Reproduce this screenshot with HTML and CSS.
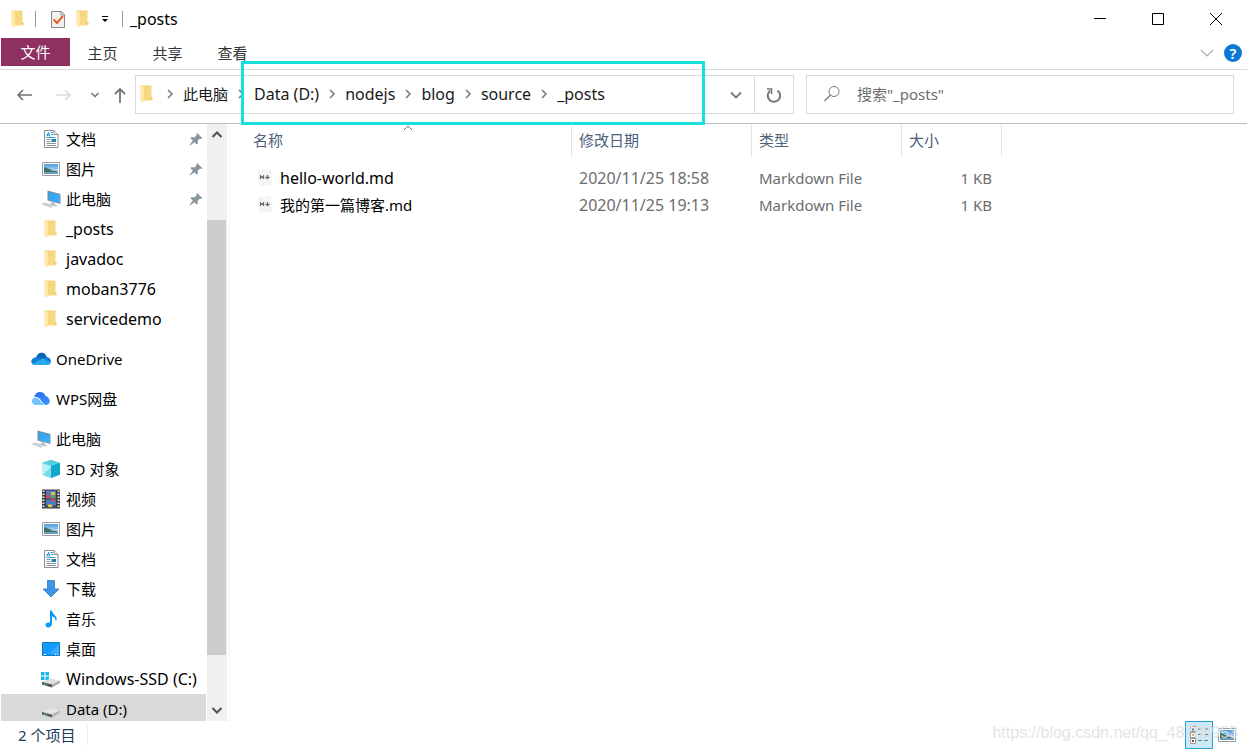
FILE: index.html
```html
<!DOCTYPE html>
<html lang="zh-CN">
<head>
<meta charset="utf-8">
<title>_posts</title>
<link rel="stylesheet" href="styles.css">
</head>
<body>
<svg class="sprite" aria-hidden="true">
  <defs>
    <linearGradient id="g-folder" x2="1" y2="1"><stop offset="0" stop-color="#f3d47b"/><stop offset="1" stop-color="#f8dc85"/></linearGradient>
    <linearGradient id="g-screen" x2="1" y2="1"><stop offset="0" stop-color="#3a9de0"/><stop offset="1" stop-color="#35b4ff"/></linearGradient>
    <linearGradient id="g-wps" x2="0" y2="1"><stop offset="0" stop-color="#2b6cf3"/><stop offset="1" stop-color="#399bff"/></linearGradient>
    <linearGradient id="g-sky" x2="0" y2="1"><stop offset="0" stop-color="#4b9be0"/><stop offset="1" stop-color="#e4f4fc"/></linearGradient>
  </defs>
  <symbol id="folder" viewBox="0 0 20 20">
    <path d="M3.500 1.500h11v12l1 1v2h-10z" fill="url(#g-folder)"/>
    <path d="M3.500 1.500L7 3v14.500l-1.500.8-2-1.500z" fill="#ffe8a3"/>
    <path d="M13 13.500V15h2.500v-1.500z" fill="#edc868"/>
  </symbol>
  <symbol id="doc" viewBox="0 0 20 20">
    <path d="M3.500 1.500h9.500l4 4v13H3.500z" fill="#fff" stroke="#8c8c8c"/>
    <path d="M13 1.500v4h4" fill="#eee" stroke="#8c8c8c"/>
    <path d="M5.500 7.500l2-4 1.500 4M6 6h3" fill="none" stroke="#168bd2"/>
    <path d="M9.500 3.500h2.500M10 5.500h2M5.500 8.500h9" stroke="#2ba1de"/>
    <path d="M5.500 10.500h4M5.500 12.500h4M5.500 14.500h9.500M5.500 16.500h9.500" stroke="#8b959d"/>
    <path d="M10.500 10h4.500v3h-4.500z" fill="#257fb7"/>
  </symbol>
  <symbol id="picture" viewBox="0 0 20 20">
    <path d="M1.500 3.500h17v13h-17z" fill="#fff" stroke="#9b9b9b"/>
    <path d="M3 5h14v10H3z" fill="url(#g-sky)"/>
    <path d="M3 8.500c4 0 5 2 8 3 2 .5 4 .5 6 1V13.500H3z" fill="#3e705e"/>
    <path d="M3 13.300h14V15H3z" fill="#629bc8"/>
  </symbol>
  <symbol id="pc" viewBox="0 0 20 20">
    <path d="M6.500 1.500l13 3.500v10l-13-3.500z" fill="#7c8c98"/>
    <path d="M7.500 2.700L19 5.800V14L7.500 11z" fill="url(#g-screen)"/>
    <path d="M10 13l4 1v2l3 .5-2 1-5-1.500z" fill="#b3bdc5"/>
    <path d="M0 15l3-1.500 10 3-3 2.500z" fill="#d7dce0"/>
    <path d="M2 15l8 2.300M4 14l7.500 2.300" stroke="#aeb8bf" stroke-width=".6"/>
  </symbol>
  <symbol id="pin" viewBox="0 0 20 20">
    <path d="M11.500 2.500l6.500 6.500-1.500 1-1.500-.5-3 3 .5 3.500-1.500 1-3-3-5.500 4-.5-.5 4-5.500L3 9l1.500-1.500 3.500.5 3-3-.5-1.500z" fill="#8b979f"/>
  </symbol>
  <symbol id="cloud" viewBox="0 0 20 20">
    <path d="M5.500 8C7 2.500 14 2 15.500 8c6 .5 5.500 8 .5 8H4C-1 16-1.500 9 5.500 8z" fill="#0b7fd6"/>
    <path d="M5.500 7.500C7.500 2.500 14 2 15.500 8L10 10z" fill="#0666b7"/>
    <path d="M1.500 15L12 9l7.500 5c-1 1.500-2 2-3.500 2H4c-1 0-2-.5-2.500-1z" fill="#28a8ea"/>
  </symbol>
  <symbol id="wps" viewBox="0 0 20 20">
    <path d="M3.500 9C3 2 13 1 14.500 7c5 1.500 6 8 1 9H12L8 9z" fill="url(#g-wps)"/>
    <path d="M4.500 8.500c5-1 5.500 7.500 10 7.500H5C-.5 16-.5 9 4.500 8.500z" fill="#76c2ff"/>
    <path d="M4 8.500c5.500-1 5.500 6 10 7.500" fill="none" stroke="#fff"/>
  </symbol>
  <symbol id="cube" viewBox="0 0 20 20">
    <path d="M10 1l9 3v11.500L10 19l-9-3.500V4z" fill="#20b5cf"/>
    <path d="M1 4l9-3 9 3-9 3z" fill="#55cfdd"/>
    <path d="M1 4l9 3v12l-9-3.500z" fill="#bdf1f4"/>
    <path d="M10 8v11l-8-3z" fill="#78dbe5"/>
    <path d="M10 7l9-3v11.500L10 19z" fill="#10a8cc"/>
  </symbol>
  <symbol id="video" viewBox="0 0 20 20">
    <path d="M1 .5h18v19H1z" fill="#3b3b3b"/>
    <path d="M5 1.500h10v8H5zM5 10.500h10v8H5z" fill="#4d79cc"/>
    <path d="M2.500 1.500v18M17.500 1.500v18" stroke="#e8e8e8" stroke-width="2" stroke-dasharray="1.500 1.500"/>
    <path d="M5 6h4v3H5z" fill="#d84265"/><path d="M10 3h4v3h-4zM7 15.500h4V18H7z" fill="#ebc233"/>
    <path d="M9 6.500h5v2H9z" fill="#4ba849"/><path d="M10.500 9h3v3.500h-3z" fill="#d84b2c"/>
    <path d="M5 16.500h2v2H5zM12 16.500h3v2h-3z" fill="#3a4d30"/>
  </symbol>
  <symbol id="download" viewBox="0 0 20 20"><path d="M6.500 1.500h7V10h4.500l-8 8-8-8h4.500z" fill="#3d95e3" stroke="#287bc5" stroke-width=".8"/></symbol>
  <symbol id="music" viewBox="0 0 20 20">
    <path d="M9 1.500h2c0 4 6 5 4.500 10h-1c0-3-2-4-3.500-4v7.500c0 4-6 4.500-6.500 1.500-.5-2.500 2-3.500 4.500-3z" fill="#0b9af1"/>
  </symbol>
  <symbol id="desktop" viewBox="0 0 20 20">
    <path d="M1.500 3.500h17v13h-17z" fill="#159aff" stroke="#1079bd"/>
    <path d="M8 15L18 5v10z" fill="#38abff"/>
    <path d="M3 15.500h2M14 15.500h1M16 15.500h1" stroke="#fff"/>
  </symbol>
  <symbol id="disk" viewBox="0 0 20 20">
    <path d="M1 13l8-3.500 10 2-8 4z" fill="#e6e6e6"/>
    <path d="M1 13l10 2.500v3L1 15.500z" fill="#5e5e5e"/>
    <path d="M11 15.500l8-4v2.500l-8 4.500z" fill="#b4b4b4"/>
    <path d="M3 15l3 .8" stroke="#52d45f"/>
  </symbol>
  <symbol id="windisk" viewBox="0 0 20 20">
    <path d="M0 3h3.500v3.500H0zM4.500 3H8v3.500H4.500zM0 7.500h3.500V11H0zM4.500 7.500H8V11H4.500z" fill="#10b7ec"/>
    <path d="M1 13l8-3.500 10 2-8 4z" fill="#dfdfdf"/>
    <path d="M1 13l10 2.500v3L1 15.500z" fill="#4e4e4e"/>
    <path d="M11 15.500l8-4v2.500l-8 4.500z" fill="#aaa"/>
    <path d="M3 15l3 .8" stroke="#52d45f"/>
  </symbol>
  <symbol id="chev-right" viewBox="0 0 10 10"><path d="M3 1l4 4-4 4" fill="none" stroke="#777" stroke-width="1.500"/></symbol>
  <symbol id="markdown" viewBox="0 0 16 20">
    <path d="M1 2l13-1 1 16-13 1z" fill="#f4f4f4"/>
    <path d="M3.500 11V8l1.500 1.500L6.500 8v3M10.500 7v3M8.500 9l2 1.500 2-1.500" fill="none" stroke="#666" stroke-width="1.200"/>
  </symbol>
</svg>

<div class="window">
  <header class="titlebar">
    <svg class="icon"><use href="#folder"/></svg>
    <span class="divider"></span>
    <button class="quick" aria-label="属性">
      <svg class="icon" viewBox="0 0 20 20"><path d="M3.500 2.500h10l3 3V18.500h-13z" fill="#f2f2f2" stroke="#888"/><path d="M13 2.500V6h3.500" fill="#fff" stroke="#888"/><path d="M5.500 10.500L9 14l6-7" fill="none" stroke="#ef5a1c" stroke-width="2"/></svg>
    </button>
    <button class="quick" aria-label="新建文件夹"><svg class="icon"><use href="#folder"/></svg></button>
    <button class="more" aria-label="自定义快速访问工具栏"><svg width="8" height="8" viewBox="0 0 8 8"><path d="M1 1.500h6" stroke="#000"/><path d="M1 4h6L4 7z"/></svg></button>
    <span class="divider"></span>
    <h1 class="title latin">_posts</h1>
    <div class="controls">
      <button aria-label="最小化"><svg width="14" height="14" viewBox="0 0 14 14"><path d="M1 6.500h12" stroke="#000"/></svg></button>
      <button aria-label="最大化"><svg width="14" height="14" viewBox="0 0 14 14"><path d="M1.500 1.500h11v11h-11z" fill="none" stroke="#000"/></svg></button>
      <button aria-label="关闭"><svg width="14" height="14" viewBox="0 0 14 14"><path d="M1 1l12 12M13 1L1 13" stroke="#000"/></svg></button>
    </div>
  </header>

  <nav class="tabs">
    <button class="tab file">文件</button>
    <button class="tab">主页</button>
    <button class="tab">共享</button>
    <button class="tab">查看</button>
    <div class="tools">
      <button aria-label="展开功能区"><svg width="14" height="10" viewBox="0 0 14 10"><path d="M1 2l6 6 6-6" fill="none" stroke="#aaa" stroke-width="1.200"/></svg></button>
      <button class="help" aria-label="帮助">?</button>
    </div>
  </nav>

  <div class="navbar">
    <div class="history">
      <button aria-label="后退"><svg width="18" height="14" viewBox="0 0 18 14"><path d="M16 7H2M7 2L2 7l5 5" fill="none" stroke="#707070" stroke-width="1.600"/></svg></button>
      <button aria-label="前进"><svg width="18" height="14" viewBox="0 0 18 14"><path d="M2 7h14M11 2l5 5-5 5" fill="none" stroke="#d9d9d9" stroke-width="1.600"/></svg></button>
      <button class="narrow" aria-label="最近浏览的位置"><svg width="10" height="8" viewBox="0 0 10 8"><path d="M1.500 2L5 5.500 8.500 2" fill="none" stroke="#777" stroke-width="1.600"/></svg></button>
      <button class="narrow" aria-label="上移"><svg width="14" height="18" viewBox="0 0 14 18"><path d="M7 17V3M2 8l5-5 5 5" fill="none" stroke="#777" stroke-width="1.800"/></svg></button>
    </div>
    <div class="address">
      <div class="crumbs">
        <svg class="icon"><use href="#folder"/></svg>
        <svg class="sep"><use href="#chev-right"/></svg>
        <a href="#">此电脑</a>
        <svg class="sep"><use href="#chev-right"/></svg>
        <a class="latin" href="#">Data (D:)</a>
        <svg class="sep"><use href="#chev-right"/></svg>
        <a class="latin" href="#">nodejs</a>
        <svg class="sep"><use href="#chev-right"/></svg>
        <a class="latin" href="#">blog</a>
        <svg class="sep"><use href="#chev-right"/></svg>
        <a class="latin" href="#">source</a>
        <svg class="sep"><use href="#chev-right"/></svg>
        <a class="latin" href="#">_posts</a>
      </div>
      <button class="drop" aria-label="以前的位置"><svg width="12" height="10" viewBox="0 0 12 10"><path d="M1 2.500l5 5 5-5" fill="none" stroke="#777" stroke-width="1.800"/></svg></button>
      <button class="refresh" aria-label="刷新"><svg width="18" height="18" viewBox="0 0 18 18"><path d="M12.500 4.500A6.200 6.200 0 1 1 5 4.800" fill="none" stroke="#777" stroke-width="2"/><path d="M2 3h4.500v5" fill="none" stroke="#777" stroke-width="1.600"/></svg></button>
      <span class="highlight"></span>
    </div>
    <label class="search">
      <svg width="18" height="18" viewBox="0 0 18 18"><circle cx="11" cy="6.500" r="5" fill="none" stroke="#777"/><path d="M7.500 10L1.500 16" stroke="#777" stroke-width="1.200"/></svg>
      <input type="text" aria-label="搜索" placeholder='搜索"_posts"'>
    </label>
  </div>

  <div class="body">
    <aside class="sidebar">
      <div class="tree">
        <ul>
          <li><svg class="icon"><use href="#doc"/></svg>文档<svg class="pin"><use href="#pin"/></svg></li>
          <li><svg class="icon"><use href="#picture"/></svg>图片<svg class="pin"><use href="#pin"/></svg></li>
          <li><svg class="icon"><use href="#pc"/></svg>此电脑<svg class="pin"><use href="#pin"/></svg></li>
          <li class="latin"><svg class="icon"><use href="#folder"/></svg>_posts</li>
          <li class="latin"><svg class="icon"><use href="#folder"/></svg>javadoc</li>
          <li class="latin"><svg class="icon"><use href="#folder"/></svg>moban3776</li>
          <li class="latin"><svg class="icon"><use href="#folder"/></svg>servicedemo</li>
        </ul>
        <ul><li class="root"><svg class="icon"><use href="#cloud"/></svg>OneDrive</li></ul>
        <ul><li class="root"><svg class="icon"><use href="#wps"/></svg>WPS网盘</li></ul>
        <ul>
          <li class="root"><svg class="icon"><use href="#pc"/></svg>此电脑</li>
          <li><svg class="icon"><use href="#cube"/></svg>3D 对象</li>
          <li><svg class="icon"><use href="#video"/></svg>视频</li>
          <li><svg class="icon"><use href="#picture"/></svg>图片</li>
          <li><svg class="icon"><use href="#doc"/></svg>文档</li>
          <li><svg class="icon"><use href="#download"/></svg>下载</li>
          <li><svg class="icon"><use href="#music"/></svg>音乐</li>
          <li><svg class="icon"><use href="#desktop"/></svg>桌面</li>
          <li class="latin"><svg class="icon"><use href="#windisk"/></svg>Windows-SSD (C:)</li>
          <li class="selected"><svg class="icon"><use href="#disk"/></svg>Data (D:)</li>
        </ul>
      </div>
      <div class="scrollbar">
        <button aria-label="向上滚动"><svg width="12" height="10" viewBox="0 0 12 10"><path d="M1.500 7L6 2.500 10.500 7" fill="none" stroke="#505050" stroke-width="2"/></svg></button>
        <div class="track"><div class="thumb"></div></div>
        <button aria-label="向下滚动"><svg width="12" height="10" viewBox="0 0 12 10"><path d="M1.500 2L6 6.500 10.500 2" fill="none" stroke="#505050" stroke-width="2"/></svg></button>
      </div>
    </aside>

    <main class="files">
      <table>
        <colgroup><col class="c-name"><col class="c-date"><col class="c-type"><col class="c-size"></colgroup>
        <thead>
          <tr>
            <th>名称<svg class="sort" viewBox="0 0 10 6"><path d="M1 5l4-4 4 4" fill="none" stroke="#666"/></svg></th>
            <th>修改日期</th><th>类型</th><th>大小</th>
          </tr>
        </thead>
        <tbody>
          <tr><td><span class="file-name latin"><svg class="md"><use href="#markdown"/></svg>hello-world.md</span></td><td class="latin">2020/11/25 18:58</td><td>Markdown File</td><td>1 KB</td></tr>
          <tr><td><span class="file-name"><svg class="md"><use href="#markdown"/></svg>我的第一篇博客.md</span></td><td class="latin">2020/11/25 19:13</td><td>Markdown File</td><td>1 KB</td></tr>
        </tbody>
      </table>
    </main>
  </div>

  <footer class="status">
    <span class="count">2 个项目</span>
    <div class="views">
      <button class="view active" aria-label="详细信息"><svg width="20" height="20" viewBox="0 0 20 20"><path d="M1.500 1.500h5v5h-5zM1.500 7.500h5v5h-5zM1.500 13.500h5v5h-5z" fill="#fff" stroke="#999"/><path d="M3 3.500h2v2H3z" fill="#317ba8"/><path d="M3 9h2v2H3z" fill="#d8b45a"/><path d="M3 15h2v2H3z" fill="#b92f20"/><path d="M9 4h4M15 4h4M9 9.500h4M15 9.500h4M9 15.500h4M15 15.500h4" stroke="#777"/></svg></button>
      <button class="view" aria-label="大图标"><svg class="icon"><use href="#picture"/></svg></button>
    </div>
    <span class="watermark">https://blog.csdn.net/qq_48786953</span>
  </footer>
</div>
</body>
</html>
```
FILE: styles.css
```css
* { box-sizing: border-box; }
body {
  margin: 0;
  background: #fff;
  color: #000;
  font: 15px/20px "Noto Sans", "Noto Sans CJK SC", sans-serif;
}
button {
  display: flex;
  align-items: center;
  justify-content: center;
  padding: 0;
  border: 0;
  background: none;
  color: inherit;
  font: inherit;
}
svg { display: block; flex: none; }
.sprite { position: absolute; width: 0; height: 0; }
.icon { width: 20px; height: 20px; }
.latin { font-size: 16px; }
.window { display: flex; flex-direction: column; height: 100vh; }

.titlebar { display: flex; align-items: center; height: 38px; padding-left: 8px; }
.divider { width: 1px; height: 16px; margin: 0 7px; background: #999; }
.quick { margin-left: 5px; }
.titlebar .more { width: 20px; margin: 0 0 0 2px; }
.title { margin: 0; font-weight: 400; }
.controls { display: flex; margin-left: auto; padding-right: 2px; }
.controls button { width: 58px; height: 38px; }

.tabs { display: flex; height: 32px; padding-left: 1px; border-bottom: 1px solid #dadbdc; color: #333; }
.tab { width: 65px; height: 29px; }
.tab.file { width: 69px; height: 28px; background: #8e3060; color: #fff; }
.tools { display: flex; align-items: center; gap: 10px; height: 30px; margin-left: auto; padding-right: 5px; }
.help { width: 18px; height: 18px; border-radius: 50%; background: #0b78d6; color: #fff; font-weight: 600; }

.navbar { display: grid; grid-template-columns: 129px 659fr 440fr; padding: 5px 13px 9px 6px; border-bottom: 1px solid #bcbcbc; }
.history { display: flex; align-items: center; }
.history button { width: 38px; }
.history button.narrow { width: 25px; }
.address { position: relative; display: flex; height: 39px; border: 1px solid #d9d9d9; }
.crumbs { display: flex; flex: 1; align-items: center; min-width: 0; padding: 0 0 2px 1px; }
.crumbs a { color: #1a1a1a; text-decoration: none; white-space: nowrap; }
.sep { width: 26px; height: 10px; }
.drop { width: 36px; height: 37px; }
.refresh { width: 39px; height: 37px; border-left: 1px solid #d9d9d9; }
.highlight { position: absolute; top: -15px; left: 105px; width: 464px; height: 64px; border: 3px solid #17dfdc; pointer-events: none; }
.search { display: flex; align-items: center; gap: 16px; height: 39px; margin-left: 12px; padding: 0 0 2px 16px; border: 1px solid #d9d9d9; }
.search input { flex: 1; min-width: 0; padding: 0; border: 0; outline: 0; font: inherit; }
.search input::placeholder { color: #6d6d6d; opacity: 1; }

.body { display: flex; flex: 1; min-height: 0; }
.sidebar { display: flex; width: 230px; padding: 0 2px 0 1px; border-right: 1px solid #f3f3f3; }
.tree { flex: 1; overflow: hidden; }
.tree ul { margin: 0 0 10px; padding: 0; list-style: none; }
.tree li { display: flex; align-items: center; gap: 5px; height: 30px; padding-left: 40px; white-space: nowrap; }
.tree li.root { padding-left: 30px; }
.tree li.selected { margin-right: 1px; background: #d9d9d9; }
.pin { width: 16px; height: 16px; margin: 0 3px 0 auto; }
.scrollbar { display: flex; flex-direction: column; width: 20px; background: #f0f0f0; }
.scrollbar button { height: 21px; }
.track { flex: 1; padding: 75px 1px 45px 0; }
.thumb { height: 100%; background: #cdcdcd; }

.files { flex: 1; overflow: hidden; }
table { width: 772px; border-collapse: separate; border-spacing: 0; table-layout: fixed; }
.c-name { width: 342px; }
.c-date { width: 180px; }
.c-type { width: 150px; }
.c-size { width: 100px; }
th { position: relative; height: 33px; padding: 0 7px 2px; border-right: 1px solid #e5e5e5; color: #4c607a; font-weight: 400; text-align: left; }
th:first-child { padding-left: 23px; }
.sort { position: absolute; top: 1px; left: 173px; width: 10px; height: 6px; }
tbody::before { content: ""; display: block; height: 7px; }
td { height: 27px; padding: 0 7px; color: #6d6d6d; white-space: nowrap; }
td:first-child { padding-left: 27px; color: #000; }
td:last-child { padding-right: 10px; text-align: right; }
.file-name { display: flex; align-items: center; gap: 7px; }
.md { width: 16px; height: 20px; }

.status { position: relative; display: flex; align-items: center; height: 30px; padding: 0 6px 2px 18px; color: #1e395b; }
.count { padding-right: 12px; border-right: 1px solid #eee; }
.views { display: flex; margin-left: auto; }
.view { width: 28px; height: 28px; }
.view.active { border: 1px solid #26a0da; background: #cbe8f6; }
.watermark { position: absolute; right: 9px; top: 2px; color: rgba(225, 225, 225, .9); font: 16px/20px "Liberation Sans", Arial, sans-serif; }
```
